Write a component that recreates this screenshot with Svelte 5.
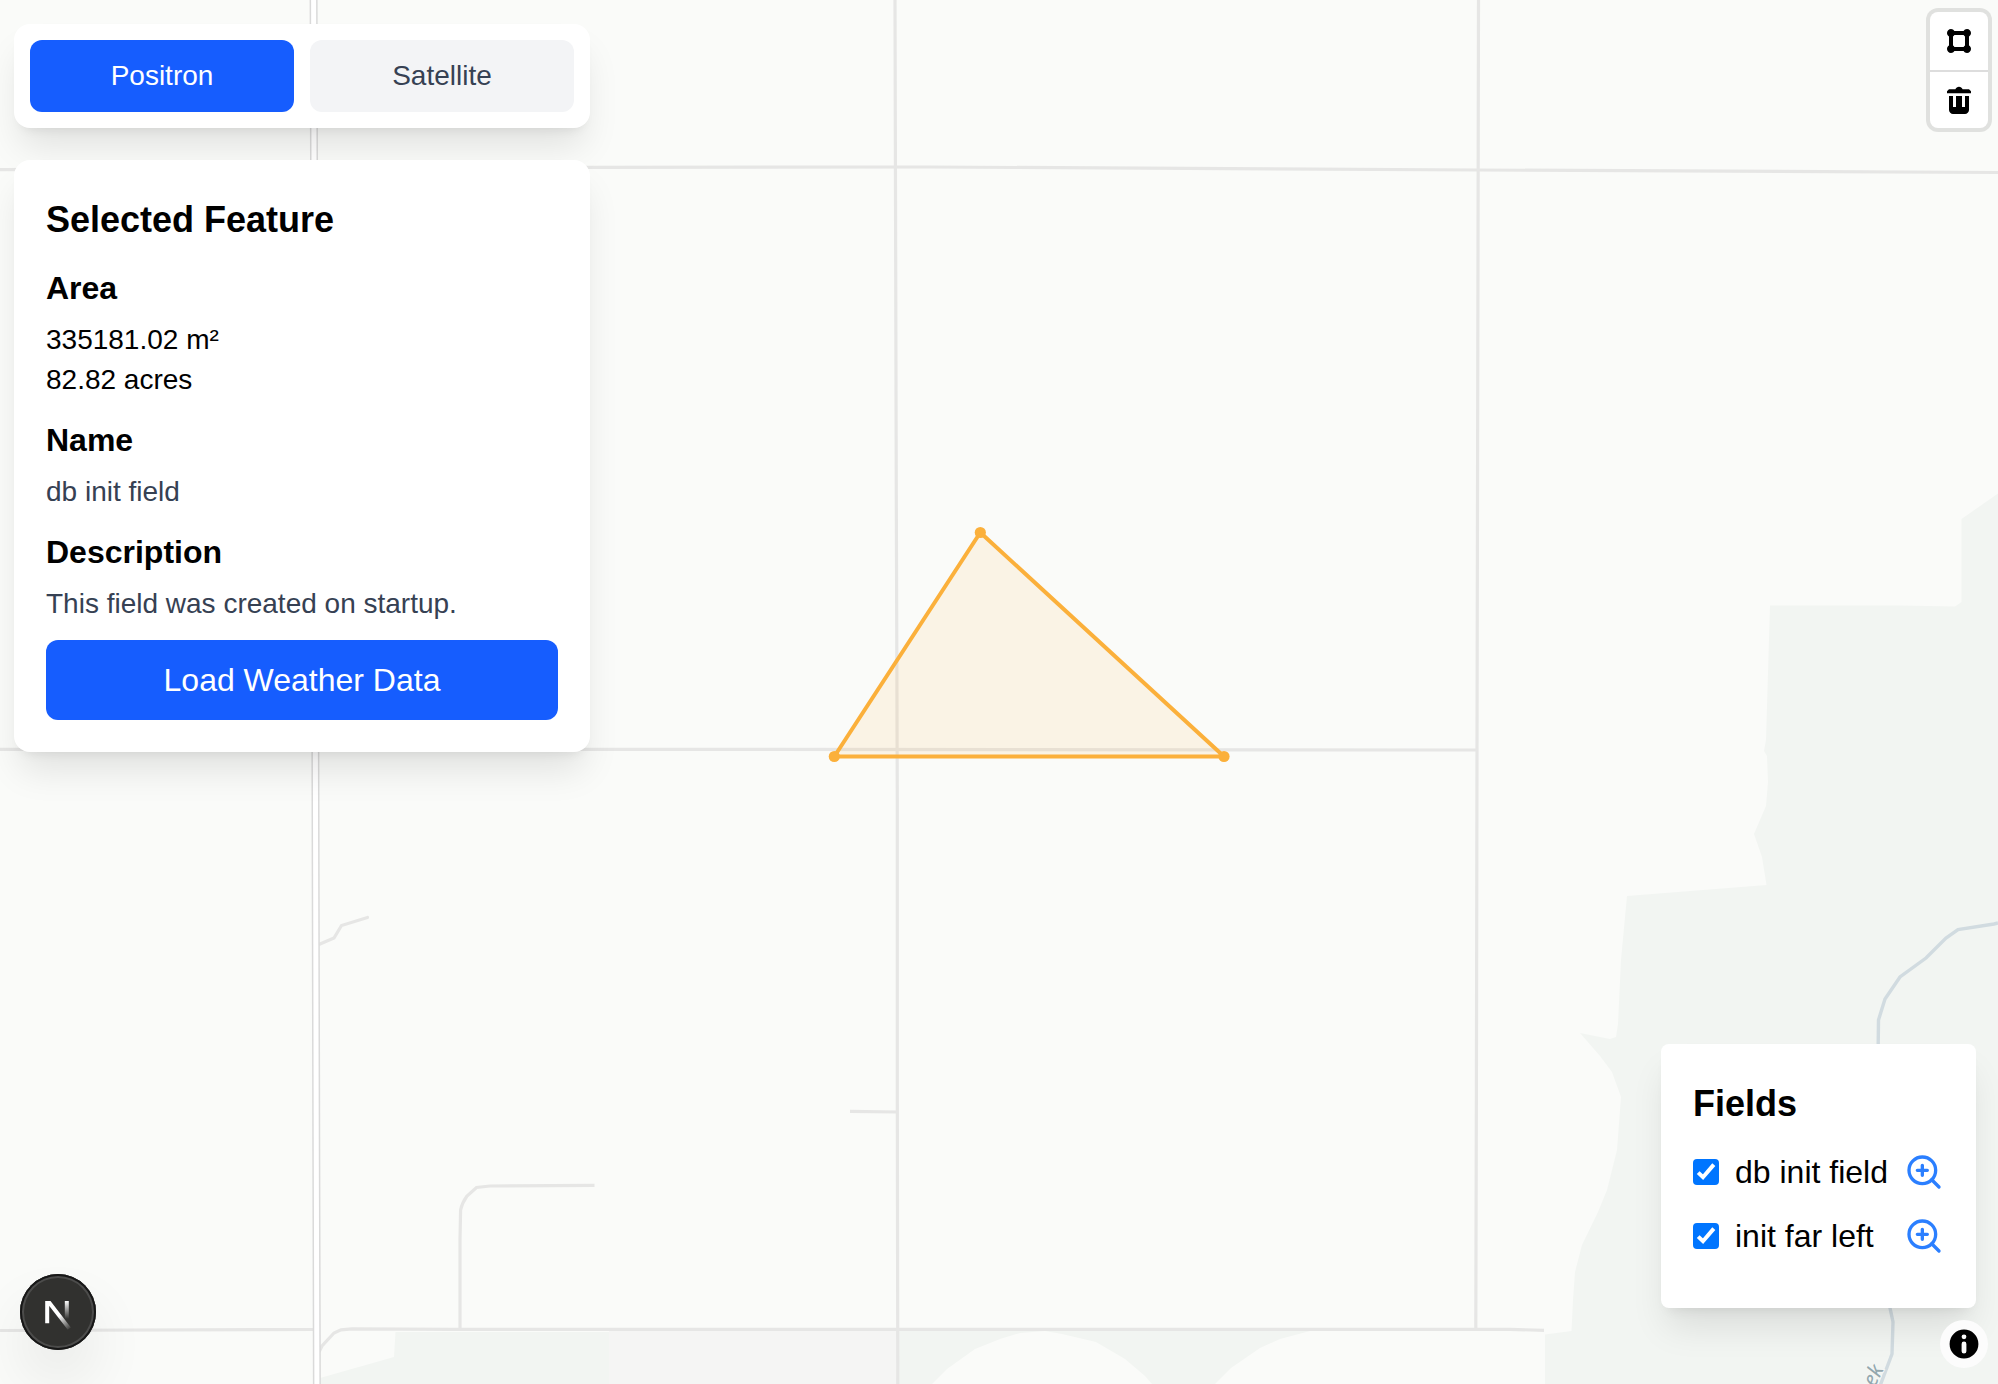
<script>
  let basemap = $state('Positron');
  const basemaps = ['Positron', 'Satellite'];

  const feature = {
    squareMetres: '335181.02',
    acres: '82.82',
    name: 'db init field',
    description: 'This field was created on startup.'
  };

  let fields = $state([
    { name: 'db init field', visible: true },
    { name: 'init far left', visible: true }
  ]);

  const vertices = [
    [980.3, 532.5],
    [1224, 756.5],
    [834.3, 756.5]
  ];
</script>

<main class="app">
  <svg class="map" viewBox="0 0 1998 1384" aria-hidden="true">
    <!-- land cover -->
    <g class="green">
      <path d="M1998 493.5 1961.5 519V602L1955 606.5 1900 605.5H1770L1766 740 1764 751 1767 756 1768 782 1766 806 1754 834 1762 857 1766.5 885 1627 896 1621 960 1618 1024 1616 1037 1610 1039 1580 1033 1600 1056 1612 1072 1621 1097 1617 1150 1607 1190 1598 1212 1582 1245 1575 1272 1573 1300 1571.5 1331 1545 1334.5V1384H1998Z" />
      <path d="M395.5 1332H609V1384H320V1378L394 1357Z" />
      <path d="M897 1331H1310L1280 1339 1260 1348 1231 1368 1215 1384H1152L1145 1376 1125 1359 1096 1342 1062 1334 1045 1331 1020 1333 1000 1339 975 1349 947 1369 932 1384H897Z" />
    </g>
    <path class="grey" d="M609 1331H897V1384H609Z" />

    <!-- creek -->
    <path class="creek" d="M1998 923 1994 924 1958 929.5 1946 938 1926 958 1900 977 1885 999 1878.5 1020 1878 1060 1882 1280 1890 1308 1893 1322 1892 1354 1880 1386" />
    <text class="creek-label" transform="translate(1884 1369) rotate(-64)" text-anchor="end">Creek</text>

    <!-- roads -->
    <g class="road">
      <path d="M0 169.7 590 167.4 930 167 1478 170 1998 172.5" />
      <path d="M0 749.3H590L1477 750" />
      <path d="M895 0 896.3 500 897.3 800V1090L897.8 1384" />
      <path d="M1478.5 0 1477 750 1476.4 1090 1475.8 1329" />
      <path d="M0 1330.5 313 1329.5" />
      <path d="M319 1352 322 1346 334 1333 341 1329.8 352 1328.8 450 1329.4H1510L1544 1330.3" />
      <path d="M320 944 334 938 341.5 925.5 367.5 917.5" stroke-linecap="round" />
      <path d="M460 1329V1240L460.6 1210Q462 1203 467 1196L476.5 1187.5 490 1186 594.5 1185.3" />
      <path d="M850 1111.3 897 1112" />
    </g>
    <path class="highway-case" d="M313.6 0 314.6 400 315.4 760 316.3 1160 316.9 1384" />
    <path class="highway" d="M313.6 0 314.6 400 315.4 760 316.3 1160 316.9 1384" />

    <!-- selected field -->
    <polygon class="field" points={vertices.map((v) => v.join(',')).join(' ')} />
    {#each vertices as [x, y]}
      <circle class="vertex" cx={x} cy={y} r="5.6" />
    {/each}
  </svg>

  <aside class="sidebar">
    <div class="card switcher">
      {#each basemaps as b}
        <button class="switch" class:active={basemap === b} onclick={() => (basemap = b)}>{b}</button>
      {/each}
    </div>

    <section class="card details">
      <h2>Selected Feature</h2>
      <h3>Area</h3>
      <p class="value">{feature.squareMetres} m²</p>
      <p class="value">{feature.acres} acres</p>
      <h3>Name</h3>
      <p class="value muted">{feature.name}</p>
      <h3>Description</h3>
      <p class="value muted">{feature.description}</p>
      <button class="load">Load Weather Data</button>
    </section>
  </aside>

  <div class="draw-controls">
    <button aria-label="Draw polygon">
      <svg viewBox="0 0 20 20"><path fill-rule="evenodd" d="M15 12.3V7.7c.6-.3 1-1 1-1.7 0-1.1-.9-2-2-2-.7 0-1.4.4-1.7 1H7.7c-.3-.6-1-1-1.7-1-1.1 0-2 .9-2 2 0 .7.4 1.4 1 1.7v4.6c-.6.3-1 1-1 1.7 0 1.1.9 2 2 2 .7 0 1.4-.4 1.7-1h4.6c.3.6 1 1 1.7 1 1.1 0 2-.9 2-2 0-.7-.4-1.4-1-1.7zm-8 0V7.7c.3-.2.6-.4.7-.7h4.6c.2.3.4.6.7.7v4.6c-.3.2-.6.4-.7.7H7.7c-.2-.3-.4-.6-.7-.7z" /></svg>
    </button>
    <button aria-label="Delete">
      <svg viewBox="0 0 20 20"><path d="M10 3.4c-.8 0-1.5.5-1.8 1.2H5l-1 1v1h12v-1l-1-1h-3.2c-.3-.7-1-1.2-1.8-1.2zM5 8v7c0 1 1 2 2 2h6c1 0 2-1 2-2V8h-2v5.5h-1.5V8h-3v5.5H7V8H5z" /></svg>
    </button>
  </div>

  <section class="fields">
    <h2>Fields</h2>
    <ul>
      {#each fields as field}
        <li>
          <label>
            <input type="checkbox" bind:checked={field.visible} />
            <span class="box" class:on={field.visible}>
              <svg viewBox="0 0 26 26"><path d="M5.2 13.6 10 18.2 20.8 5.6" /></svg>
            </span>
            {field.name}
          </label>
          <button class="zoom" aria-label="Zoom to field">
            <svg viewBox="0 0 24 24">
              <circle cx="11" cy="11" r="8" />
              <path d="M21 21 16.65 16.65M11 8v6M8 11h6" />
            </svg>
          </button>
        </li>
      {/each}
    </ul>
  </section>

  <button class="info" aria-label="Toggle attribution">
    <svg viewBox="0 0 20 20"><path fill-rule="evenodd" d="M4 10a6 6 0 1 0 12 0 6 6 0 1 0-12 0m5-3a1 1 0 1 0 2 0 1 1 0 1 0-2 0m0 3a1 1 0 1 1 2 0v3a1 1 0 1 1-2 0" /></svg>
  </button>

  <button class="dev" aria-label="Dev tools">
    <svg viewBox="0 0 76 76">
      <defs>
        <linearGradient id="diag" gradientUnits="userSpaceOnUse" x1="39" y1="42" x2="50" y2="56">
          <stop offset="0" stop-color="#fff" />
          <stop offset="1" stop-color="#fff" stop-opacity="0" />
        </linearGradient>
        <linearGradient id="bar" gradientUnits="userSpaceOnUse" x1="47" y1="27" x2="47" y2="45">
          <stop offset="0" stop-color="#fff" />
          <stop offset="1" stop-color="#fff" stop-opacity="0" />
        </linearGradient>
        <clipPath id="cap"><rect x="20" y="27" width="36" height="32" /></clipPath>
      </defs>
      <g clip-path="url(#cap)" fill="none" stroke-width="4">
        <path d="M49.3 54.6 27.2 26V49.3" stroke="url(#diag)" />
        <path d="M46.8 27V48" stroke="url(#bar)" />
      </g>
    </svg>
  </button>
</main>

<style>
  :global(body) {
    margin: 0;
    overflow: hidden;
  }

  .app {
    --panel-shadow: 0 24px 36px -6px rgba(0, 0, 0, 0.1), 0 8px 12px -8px rgba(0, 0, 0, 0.1);
    position: relative;
    width: 1998px;
    height: 1384px;
    overflow: hidden;
    background: #fafbf9;
    color: #000;
    font-family: 'Liberation Sans', Arial, sans-serif;
    font-size: 32px;
    line-height: 48px;
  }

  h2, h3, p, ul {
    margin: 0;
    padding: 0;
  }

  button {
    margin: 0;
    padding: 0;
    border: 0;
    font: inherit;
    cursor: pointer;
  }

  /* map */
  .map {
    display: block;
    width: 100%;
    height: 100%;
  }
  .green { fill: #f2f5f2; }
  .grey { fill: #f5f5f4; }
  .creek { fill: none; stroke: #d1dbe0; stroke-width: 3.4; }
  .creek-label {
    font: italic 21px 'Noto Sans', sans-serif;
    fill: #93a7ae;
    stroke: #f5f7f5;
    stroke-width: 2;
    paint-order: stroke;
  }
  .road { fill: none; stroke: #e6e6e5; stroke-width: 3.2; }
  .highway-case { fill: none; stroke: #dadada; stroke-width: 8; }
  .highway { fill: none; stroke: #fff; stroke-width: 5; }
  .field {
    fill: rgba(251, 176, 59, 0.1);
    stroke: #fbb03b;
    stroke-width: 4;
    stroke-linejoin: round;
  }
  .vertex { fill: #fbb03b; }

  /* left column */
  .sidebar {
    position: absolute;
    top: 24px;
    left: 14px;
    width: 576px;
    display: flex;
    flex-direction: column;
    gap: 32px;
  }
  .card {
    background: #fff;
    border-radius: 16px;
    box-shadow: var(--panel-shadow);
  }
  .switcher {
    display: flex;
    gap: 16px;
    padding: 16px;
  }
  .switch {
    flex: 1;
    padding: 16px;
    border-radius: 12px;
    background: #f3f4f6;
    color: #364153;
    font-size: 28px;
    line-height: 40px;
  }
  .switch.active {
    background: #165dfe;
    color: #fff;
  }
  .details {
    display: flex;
    flex-direction: column;
    padding: 32px;
  }
  h2 {
    font-size: 36px;
    line-height: 56px;
    font-weight: 700;
    margin-bottom: 16px;
  }
  h3 {
    font-size: 32px;
    line-height: 48px;
    font-weight: 700;
    margin-bottom: 8px;
  }
  .value {
    font-size: 28px;
    line-height: 40px;
  }
  .value + h3 { margin-top: 16px; }
  .muted { color: #364153; }
  .load {
    height: 80px;
    margin-top: 16px;
    border-radius: 12px;
    background: #165dfe;
    color: #fff;
  }

  /* drawing tools */
  .draw-controls {
    position: absolute;
    top: 12px;
    right: 10px;
    width: 58px;
    display: flex;
    flex-direction: column;
    border-radius: 8px;
    background: #fff;
    box-shadow: 0 0 0 4px rgba(0, 0, 0, 0.1);
  }
  .draw-controls button {
    display: grid;
    place-items: center;
    height: 58px;
    background: none;
  }
  .draw-controls button + button {
    box-sizing: border-box;
    border-top: 2px solid #ddd;
  }
  .draw-controls svg {
    width: 40px;
    height: 40px;
  }

  /* field list */
  .fields {
    position: absolute;
    right: 22px;
    bottom: 76px;
    width: 315px;
    box-sizing: border-box;
    padding: 32px;
    border-radius: 8px;
    background: #fff;
    box-shadow: var(--panel-shadow);
  }
  .fields ul { list-style: none; }
  .fields li {
    display: flex;
    align-items: center;
    justify-content: space-between;
    margin-bottom: 16px;
    white-space: nowrap;
  }
  .fields label {
    display: flex;
    align-items: center;
    gap: 16px;
  }
  .fields input {
    position: absolute;
    opacity: 0;
    pointer-events: none;
  }
  .box {
    width: 26px;
    height: 26px;
    border-radius: 4px;
    background: #ddd;
  }
  .box.on { background: #0075ff; }
  .box svg {
    display: block;
    fill: none;
    stroke: #fff;
    stroke-width: 4;
  }
  .zoom {
    display: flex;
    background: none;
  }
  .zoom svg {
    width: 40px;
    height: 40px;
    fill: none;
    stroke: #2b7fff;
    stroke-width: 2;
    stroke-linecap: round;
    stroke-linejoin: round;
  }

  /* attribution toggle */
  .info {
    position: absolute;
    right: 10px;
    bottom: 16px;
    width: 48px;
    height: 48px;
    border-radius: 50%;
    background: #fcfcfc;
  }
  .info svg { display: block; }

  /* dev badge */
  .dev {
    position: absolute;
    left: 20px;
    bottom: 34px;
    width: 76px;
    height: 76px;
    border-radius: 50%;
    background: #31312f;
    box-shadow: inset 0 0 0 2px #171717, inset 0 0 0 4px #4c4c4b, 0 32px 64px -8px rgba(0, 0, 0, 0.12);
  }
  .dev svg { display: block; }
</style>
